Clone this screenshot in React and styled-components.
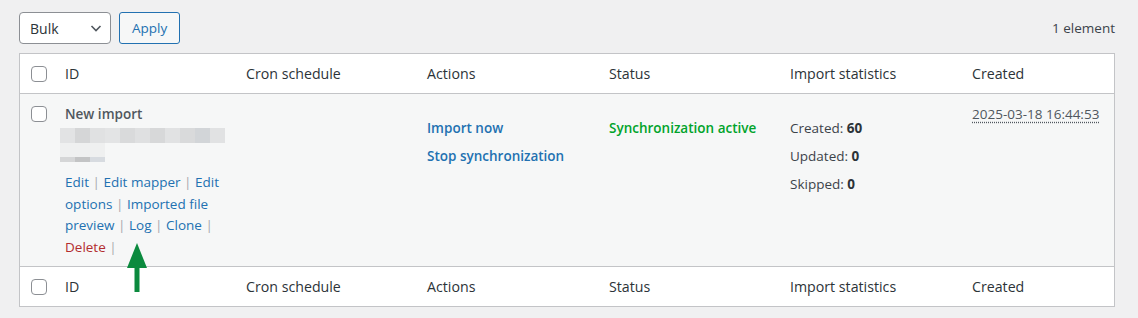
import React from "react";
import styled, { createGlobalStyle } from "styled-components";

const GlobalStyles = createGlobalStyle`
  html, body {
    margin: 0;
    padding: 0;
    background: #f0f0f1;
    font-family: "Open Sans", "Noto Sans", sans-serif;
    font-size: 13.5px;
    color: #3c434a;
  }
`;

const Page = styled.div`
  padding: 12px 23px 12px 19px;
`;

const TopBar = styled.div`
  display: flex;
  align-items: center;
  height: 32px;
  margin-bottom: 9px;
`;

const Select = styled.div`
  width: 92px;
  height: 32px;
  box-sizing: border-box;
  border: 1px solid #8c8f94;
  border-radius: 4px;
  background: #fff;
  display: flex;
  align-items: center;
  justify-content: space-between;
  padding: 0 6px 0 10px;
  font-size: 14px;
  color: #2c3338;
`;

const Button = styled.div`
  margin-left: 8px;
  height: 32px;
  box-sizing: border-box;
  padding: 0 12px;
  border: 1px solid #2271b1;
  border-radius: 3px;
  background: #f6f7f7;
  color: #2271b1;
  display: flex;
  align-items: center;
  font-size: 13.5px;
`;

const Count = styled.div`
  margin-left: auto;
  color: #3c434a;
`;

const Table = styled.div`
  border: 1px solid #c3c4c7;
  background: #fff;
`;

const Row = styled.div`
  display: grid;
  grid-template-columns: 35px 181px 181px 182px 181px 182px 1fr;
  background: ${(p) => (p.$body ? "#f6f7f7" : "#fff")};
  border-bottom: ${(p) => (p.$head ? "1px solid #c3c4c7" : "none")};
  border-top: ${(p) => (p.$foot ? "1px solid #c3c4c7" : "none")};
`;

const HeadCell = styled.div`
  height: 39px;
  display: flex;
  align-items: center;
  padding: 0 10px;
  font-size: 14.2px;
  color: #2c3338;
`;

const CheckCell = styled.div`
  display: flex;
  align-items: ${(p) => (p.$top ? "flex-start" : "center")};
  padding: ${(p) => (p.$top ? "12px 0 0 11px" : "0 0 0 11px")};
`;

const Box = styled.span`
  width: 16px;
  height: 16px;
  box-sizing: border-box;
  border: 1px solid #8c8f94;
  border-radius: 4px;
  background: #fff;
`;

const Cell = styled.div`
  position: relative;
  padding: ${(p) => p.$pad || "10px 10px 8px"};
  line-height: 20px;
`;

const Title = styled.div`
  font-weight: 600;
  color: #50575e;
`;

const Blur = styled.div`
  display: flex;
  margin-left: -5px;
  margin-top: ${(p) => p.$mt || 0}px;
`;

const Pixel = styled.span`
  width: 15px;
  height: ${(p) => p.$h}px;
  background: ${(p) => p.$c};
`;

const Actions = styled.div`
  margin-top: 10px;
  line-height: 21.5px;
`;

const Link = styled.span`
  color: ${(p) => (p.$danger ? "#b32d2e" : "#2271b1")};
  font-weight: ${(p) => (p.$strong ? 600 : 400)};
`;

const Sep = styled.span`
  color: #a7aaad;
`;

const Stack = styled.div`
  display: flex;
  flex-direction: column;
  gap: 8px;
`;

const Status = styled.div`
  color: #00a32a;
  font-weight: 600;
`;

const Stat = styled.div`
  color: #3c434a;
  b {
    font-weight: 700;
    color: #2c3338;
  }
`;

const Date = styled.span`
  color: #50575e;
  text-decoration: underline dotted;
  text-underline-offset: 3px;
`;

const Arrow = styled.svg`
  position: absolute;
  left: 71px;
  top: 149px;
`;

const row1 = ["#e2e3e4", "#d5d6d7", "#e0e1e2", "#e3e4e5", "#d9dadb", "#dfe0e1", "#d7d8d9", "#e1e2e3", "#d9dadb", "#d2d5d8", "#e1e2e3"];
const row3 = ["#d5d6d7", "#c3c4c5", "#d7dbe0"];

const columns = ["ID", "Cron schedule", "Actions", "Status", "Import statistics", "Created"];
const rowActions = ["Edit", "Edit mapper", "Edit options", "Imported file preview", "Log", "Clone"];

function HeaderRow({ foot }) {
  return (
    <Row $head={!foot} $foot={foot}>
      <CheckCell>
        <Box />
      </CheckCell>
      {columns.map((c) => (
        <HeadCell key={c}>{c}</HeadCell>
      ))}
    </Row>
  );
}

function App() {
  return (
    <Page>
      <GlobalStyles />
      <TopBar>
        <Select>
          Bulk
          <svg width="16" height="16" viewBox="0 0 16 16" fill="none">
            <path d="M3.5 6l4.5 4.5L12.5 6" stroke="#50575e" strokeWidth="1.6" />
          </svg>
        </Select>
        <Button>Apply</Button>
        <Count>1 element</Count>
      </TopBar>
      <Table>
        <HeaderRow />
        <Row $body>
          <CheckCell $top>
            <Box />
          </CheckCell>
          <Cell>
            <Title>New import</Title>
            <Blur $mt={4}>
              {row1.map((c, i) => (
                <Pixel key={i} $h={15} $c={c} />
              ))}
            </Blur>
            <Blur>
              {row3.map((c, i) => (
                <Pixel key={i} $h={14} $c="#eff0f0" />
              ))}
            </Blur>
            <Blur>
              {row3.map((c, i) => (
                <Pixel key={i} $h={5} $c={c} />
              ))}
            </Blur>
            <Actions>
              {rowActions.map((a) => (
                <React.Fragment key={a}>
                  <Link>{a}</Link> <Sep>|</Sep>{" "}
                </React.Fragment>
              ))}
              <Link $danger>Delete</Link> <Sep>|</Sep>
            </Actions>
            <Arrow width="22" height="50" viewBox="0 0 22 50">
              <path d="M11 0L21 25H13.5V49H8.5V25H1Z" fill="#0b8a3e" />
            </Arrow>
          </Cell>
          <Cell />
          <Cell $pad="24px 10px 8px">
            <Stack>
              <Link $strong>Import now</Link>
              <Link $strong>Stop synchronization</Link>
            </Stack>
          </Cell>
          <Cell $pad="24px 10px 8px">
            <Status>Synchronization active</Status>
          </Cell>
          <Cell $pad="24px 10px 8px">
            <Stack>
              <Stat>
                Created: <b>60</b>
              </Stat>
              <Stat>
                Updated: <b>0</b>
              </Stat>
              <Stat>
                Skipped: <b>0</b>
              </Stat>
            </Stack>
          </Cell>
          <Cell>
            <Date>2025-03-18 16:44:53</Date>
          </Cell>
        </Row>
        <HeaderRow foot />
      </Table>
    </Page>
  );
}

export default App;
